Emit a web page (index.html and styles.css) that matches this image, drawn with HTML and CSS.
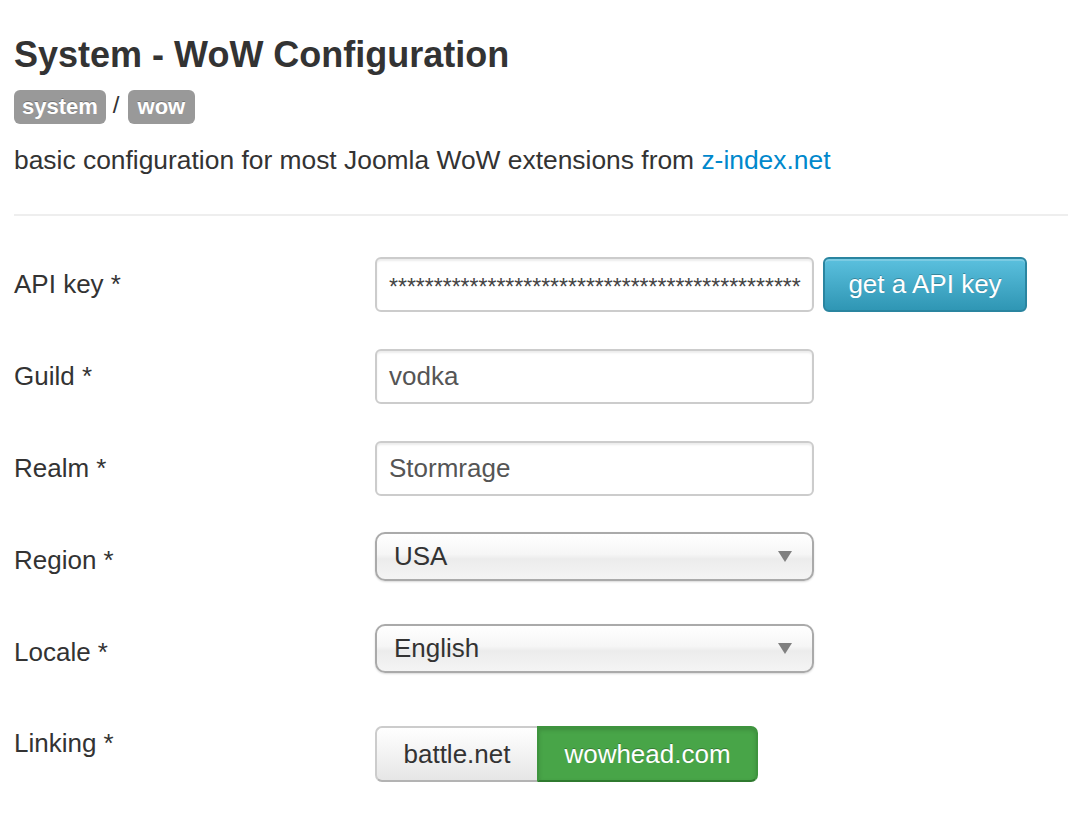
FILE: index.html
```html
<!DOCTYPE html>
<html>
<head>
<meta charset="utf-8">
<link rel="stylesheet" href="styles.css">
</head>
<body>
<div class="page">
  <h1 class="title">System - WoW Configuration</h1>
  <div class="crumbs"><span class="badge">system</span><span class="sep">/</span><span class="badge">wow</span></div>
  <p class="desc">basic configuration for most Joomla WoW extensions from <a href="#" class="link">z-index.net</a></p>
  <hr class="rule">
  <div class="form">
    <div class="row">
      <div class="label">API key *</div>
      <div class="controls">
        <div class="input pw">**********************************************</div>
        <div class="btn-info">get a API key</div>
      </div>
    </div>
    <div class="row">
      <div class="label">Guild *</div>
      <div class="controls"><div class="input">vodka</div></div>
    </div>
    <div class="row">
      <div class="label">Realm *</div>
      <div class="controls"><div class="input">Stormrage</div></div>
    </div>
    <div class="row">
      <div class="label">Region *</div>
      <div class="controls"><div class="select"><span>USA</span><span class="arrow"></span></div></div>
    </div>
    <div class="row">
      <div class="label">Locale *</div>
      <div class="controls"><div class="select"><span>English</span><span class="arrow"></span></div></div>
    </div>
    <div class="row row-radio">
      <div class="label">Linking *</div>
      <div class="controls">
        <div class="btn-group">
          <div class="seg">battle.net</div>
          <div class="seg seg-active">wowhead.com</div>
        </div>
      </div>
    </div>
  </div>
</div>
</body>
</html>
```
FILE: styles.css
```css
html, body {
  margin: 0;
  padding: 0;
  background: #fff;
}
body {
  font-family: "Liberation Sans", Arial, sans-serif;
  color: #333;
}
.page {
  padding: 0 0 0 14px;
}
.title {
  margin: 0;
  padding-top: 34px;
  font-size: 36px;
  line-height: 42px;
  font-weight: bold;
  color: #333;
}
.crumbs {
  display: flex;
  align-items: center;
  margin-top: 14px;
  height: 34px;
}
.badge {
  display: inline-block;
  background: #999;
  color: #fff;
  font-weight: bold;
  font-size: 22px;
  line-height: 26px;
  padding: 4px 8px;
  border-radius: 6px;
  text-shadow: 0 -1px 0 rgba(0,0,0,0.25);
}
.badge + .sep + .badge {
  padding: 4px 10px;
}
.sep {
  font-size: 24px;
  margin: 0 8px 0 7px;
  color: #333;
  position: relative;
  top: -2px;
}
.desc {
  margin: 18px 0 0;
  font-size: 26.4px;
  line-height: 36px;
}
.link {
  color: #0088cc;
  text-decoration: none;
}
.rule {
  margin: 36px 0 0;
  border: 0;
  border-top: 2px solid #eee;
  height: 0;
}
.form {
  padding-top: 40px;
}
.row {
  display: flex;
  align-items: center;
  height: 56px;
  margin-bottom: 36px;
}
.label {
  width: 361px;
  flex: none;
  font-size: 26px;
  color: #333;
}
.controls {
  display: flex;
  align-items: center;
  gap: 9px;
}
.input {
  box-sizing: border-box;
  width: 439px;
  height: 55px;
  border: 2px solid #ccc;
  border-radius: 6px;
  padding: 0 12px;
  font-size: 26px;
  line-height: 51px;
  color: #555;
  box-shadow: inset 0 2px 2px rgba(0,0,0,0.075);
  background: #fff;
}
.input.pw {
  font-size: 23px;
  color: #444;
  overflow: hidden;
  white-space: nowrap;
  line-height: 56px;
}
.btn-info {
  box-sizing: border-box;
  width: 204px;
  height: 55px;
  border-radius: 6px;
  border: 2px solid #2a85a0;
  background: linear-gradient(to bottom, #5bc0de, #2f96b4);
  color: #fff;
  font-size: 26px;
  line-height: 51px;
  text-align: center;
  text-shadow: 0 -1px 0 rgba(0,0,0,0.25);
  box-shadow: inset 0 2px 0 rgba(255,255,255,0.2);
}
.select {
  box-sizing: border-box;
  width: 439px;
  height: 49px;
  margin-bottom: 7px;
  border: 2px solid #aaa;
  border-radius: 10px;
  background: linear-gradient(to bottom, #ffffff 0%, #f6f6f6 45%, #ececec 55%, #f4f4f4 100%);
  box-shadow: 0 1px 2px rgba(0,0,0,0.15);
  display: flex;
  align-items: center;
  justify-content: space-between;
  padding: 0 20px 0 17px;
  font-size: 26px;
  color: #333;
}
.arrow {
  width: 0;
  height: 0;
  border-left: 7px solid transparent;
  border-right: 7px solid transparent;
  border-top: 11px solid #808080;
}
.row-radio {
  align-items: flex-start;
  height: auto;
  padding-top: 10px;
}
.row-radio .label {
  line-height: 34px;
}
.btn-group {
  display: flex;
}
.seg {
  box-sizing: border-box;
  height: 56px;
  font-size: 26px;
  line-height: 52px;
  text-align: center;
  border: 2px solid #ccc;
  border-bottom-color: #b3b3b3;
}
.seg:first-child {
  width: 162px;
  border-radius: 7px 0 0 7px;
  background: linear-gradient(to bottom, #ffffff, #e6e6e6);
  color: #333;
  border-right: 0;
}
.seg-active {
  width: 221px;
  border-radius: 0 7px 7px 0;
  background: #48a548;
  border: 2px solid #3e943e;
  border-bottom-color: #2f7a2f;
  color: #fff;
  text-shadow: 0 -1px 0 rgba(0,0,0,0.25);
  box-shadow: inset 0 2px 4px rgba(0,0,0,0.15);
}
```
